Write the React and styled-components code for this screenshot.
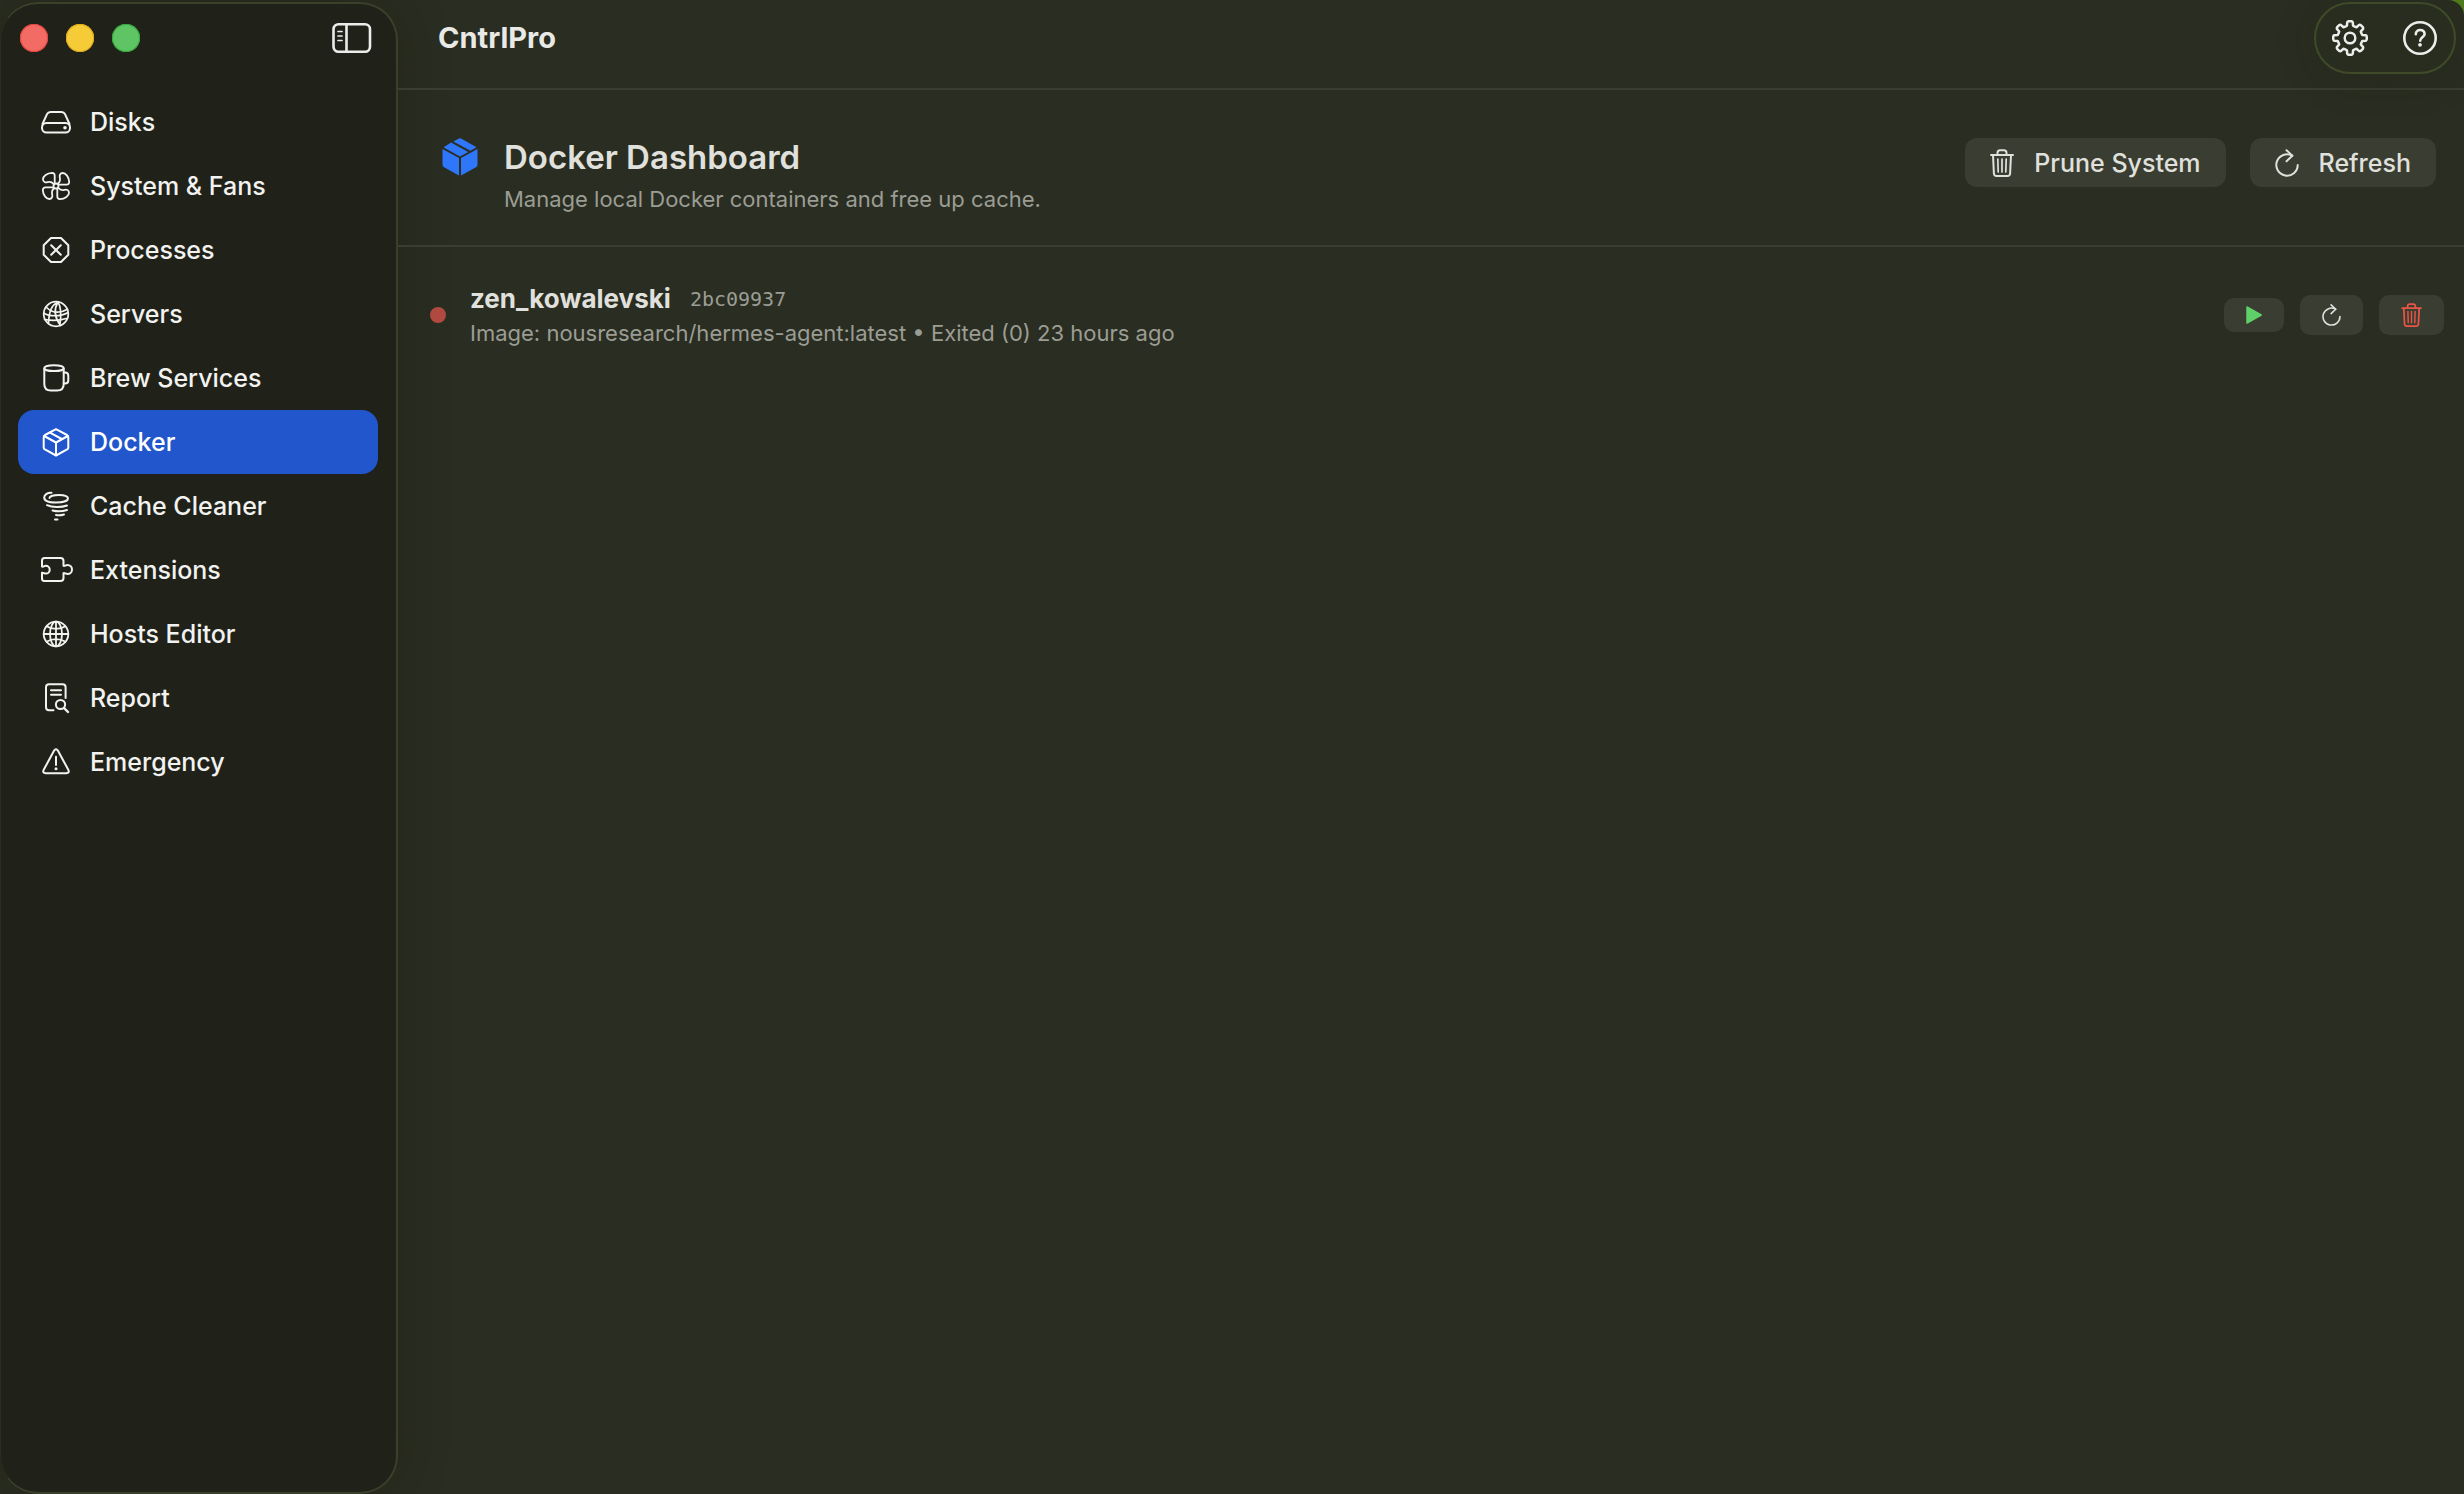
import { useState } from 'react';
import styled, { createGlobalStyle, css } from 'styled-components';

const GlobalStyle = createGlobalStyle`
    * {
        box-sizing: border-box;
    }

    body {
        margin: 0;
        background: #4f7a1c;
        color: #e0e1dd;
        font-family: Inter, 'Liberation Sans', sans-serif;
        font-size: 25px;
    }

    button {
        border: none;
        background: none;
        padding: 0;
        color: inherit;
        font: inherit;
        cursor: pointer;
    }
`;

const Window = styled.div`
    display: flex;
    min-height: 100vh;
    padding-top: 2px;
    border-top-right-radius: 16px;
    background: #2a2d21;
    overflow: hidden;
`;

const Sidebar = styled.aside`
    flex: 0 0 398px;
    border: 2px solid #3a412b;
    border-left: 1px solid #2a2e20;
    border-radius: 38px;
    background: #20221a;
    box-shadow: 0 0 50px rgba(20, 24, 8, 0.3);
`;

const SidebarTop = styled.div`
    display: flex;
    align-items: center;
    justify-content: space-between;
    height: 68px;
    padding: 0 24px 0 19px;
`;

const Lights = styled.div`
    display: flex;
    gap: 18px;
`;

const Light = styled.button`
    width: 28px;
    height: 28px;
    border-radius: 50%;
    background: ${(props) => props.$fill};
    box-shadow: inset 0 0 0 1px ${(props) => props.$edge};
`;

const IconButton = styled.button`
    display: grid;
    place-items: center;
    color: #ecedea;
`;

const Nav = styled.nav`
    padding: 18px 18px 0 17px;
`;

const NavItem = styled.button`
    display: flex;
    align-items: center;
    gap: 16px;
    width: 100%;
    height: 64px;
    padding: 0 20px;
    border-radius: 16px;
    color: #f2f3f0;
    font-weight: 500;
    text-align: left;

    ${(props) =>
        props.$active &&
        css`
            background: #2156cc;
            color: #ffffff;
        `}
`;

const Main = styled.main`
    flex: 1;
    min-width: 0;
`;

const TitleBar = styled.header`
    display: flex;
    align-items: center;
    justify-content: space-between;
    height: 88px;
    padding: 0 8px 14px 40px;
    border-bottom: 2px solid #3a3d32;
`;

const AppTitle = styled.h1`
    margin: 0;
    font-size: 29px;
    font-weight: 700;
    line-height: 36px;
    color: #e9eae6;
`;

const Tools = styled.div`
    display: flex;
    align-items: center;
    justify-content: space-between;
    width: 142px;
    height: 72px;
    padding: 0 16px;
    border: 2px solid #3f4b28;
    border-radius: 36px;
    background: #292d20;
    box-shadow: 0 4px 40px rgba(24, 28, 14, 0.2);
`;

const PageHeader = styled.section`
    display: flex;
    align-items: center;
    justify-content: space-between;
    height: 157px;
    padding: 0 28px 10px 42px;
    border-bottom: 2px solid #3a3d32;
`;

const Heading = styled.div`
    display: grid;
    grid-template-columns: 38px auto;
    column-gap: 26px;
    row-gap: 6px;
    align-items: center;
    justify-items: end;
    padding-top: 27px;
`;

const PageTitle = styled.h2`
    justify-self: start;
    margin: 0;
    font-size: 33px;
    font-weight: 600;
    line-height: 40px;
`;

const PageText = styled.p`
    grid-column: 2;
    margin: 0;
    font-size: 22px;
    line-height: 32px;
    color: #9b9d95;
`;

const Actions = styled.div`
    display: flex;
    align-items: center;
    gap: ${(props) => props.$gap};
`;

const TextButton = styled.button`
    display: flex;
    align-items: center;
    gap: 20px;
    height: 49px;
    padding: 0 25px;
    border-radius: 12px;
    background: #3a3d31;
    font-weight: 500;
`;

const ContainerRow = styled.article`
    display: flex;
    align-items: center;
    height: 72px;
    margin-top: 32px;
    padding: 0 20px 0 32px;
`;

const StatusDot = styled.span`
    width: 16px;
    height: 16px;
    margin-right: 24px;
    border-radius: 50%;
    background: #b04a40;
`;

const Info = styled.div`
    flex: 1;
`;

const NameLine = styled.div`
    display: flex;
    align-items: center;
    gap: 19px;
    line-height: 36px;
`;

const Name = styled.strong`
    font-size: 26px;
    font-weight: 700;
`;

const ShortId = styled.code`
    font-family: 'DejaVu Sans Mono', monospace;
    font-size: 20px;
    color: #9b9d95;
`;

const Details = styled.div`
    font-size: 22px;
    line-height: 32px;
    color: #9b9d95;
`;

const SmallButton = styled.button`
    display: grid;
    place-items: center;
    padding: 8px 22px;
    border-radius: 10px;
    background: #3a3d31;
    color: ${(props) => props.$color || '#e0e1dd'};
`;

// общая обертка для иконок
function Icon({ w = 36, h = 32, box, stroke = 2, children }) {
    return (
        <svg
            width={w}
            height={h}
            viewBox={box || `0 0 ${w} ${h}`}
            fill="none"
            stroke="currentColor"
            strokeWidth={stroke}
            strokeLinecap="round"
            strokeLinejoin="round"
            aria-hidden="true"
        >
            {children}
        </svg>
    );
}

const DiskIcon = () => (
    <Icon>
        <path d="M4.5 18 9 8.2Q10 6 12.5 6h11q2.5 0 3.5 2.2L31.500 18" />
        <rect x="4" y="17" width="28" height="9.500" rx="4.500" />
        <circle cx="27" cy="21.700" r="1.800" fill="currentColor" stroke="none" />
    </Icon>
);

const FanIcon = () => (
    <Icon stroke={1.8}>
        {[0, 90, 180, 270].map((angle) => (
            <path
                key={angle}
                transform={`rotate(${angle} 18 16)`}
                d="M16.700 13V5.500Q16.700 3 14 2.800C9 3 5 6.300 5 9.300 5 12 7.500 12.700 9.500 12.200 12 11.600 14 12 15.500 14"
            />
        ))}
        <circle cx="18" cy="16" r="2.500" />
    </Icon>
);

const ProcessIcon = () => (
    <Icon>
        <path d="M13 4h10l7.300 7.300v9.400L23 28H13l-7.300-7.300v-9.400z" />
        <path d="m13.200 11.200 9.600 9.600m0-9.600-9.600 9.600" />
    </Icon>
);

const NetworkIcon = () => (
    <Icon stroke={1.7}>
        <circle cx="18" cy="16" r="12.300" />
        <path d="M20 3.900C14 7 11 12 10.500 25.500M20 3.900c-4 7-4 15 2.500 23.500M20 3.900c3 5 3.500 13 1.800 23.300" />
        <path d="M8 9c6 6 14 6.500 21.500 2.200M5.700 15c5 3.500 17 4 24.400-.5M6.500 21.500c6 1 14 1.500 21.800-1" />
    </Icon>
);

const MugIcon = () => (
    <Icon>
        <ellipse cx="16" cy="6.200" rx="9.700" ry="2.900" />
        <path d="M6.300 6.500V22q0 6.500 6.500 6.500h6.400q6.500 0 6.500-6.500V6.500" />
        <path d="M25.700 10.500h1.300q3.300 0 3.300 3.300v4.400q0 3.300-3.300 3.300h-1.300" />
    </Icon>
);

const BoxIcon = () => (
    <Icon>
        <path d="M18 3.200 29 9q1.300.8 1.300 2.200v10.200q0 1.300-1.200 2L18 29.500 6.900 23.400q-1.200-.7-1.200-2V11.200Q5.700 9.800 7 9z" />
        <path d="M6.200 10 18 16.500 29.800 10M18 16.500v12.800M12 6.600l11.800 6.400" />
    </Icon>
);

const TornadoIcon = () => (
    <Icon>
        <path d="M13.500 2.800C9 2.600 6.200 4.800 6.200 7.500 6.200 11 12 12.500 18 12.500s12-1.300 12-4-4-3.500-9-3.500-9.500 1.200-9.500 3" />
        <path d="M9 15.200c5 2.300 14.500 2.400 20 .3M14.500 20.500c4 1 10 1 14.500-.5M18 25c2.500.5 5.500.3 8-.5M17 29.400h2.500" />
    </Icon>
);

const PuzzleIcon = () => (
    <Icon>
        <path d="M6.500 4h16q3 0 3 3v4.800c1.200.5 2-.8 4-.8a4.500 4.500 0 0 1 0 9c-2 0-2.800-1.300-4-.8V24q0 3-3 3h-16Q4 27 4 24.500v-5.700c1.500-.3 2 .8 3.800.8a3.900 3.900 0 0 0 0-7.800C6 11.800 5.500 13 4 12.600V6.500Q4 4 6.500 4z" />
    </Icon>
);

const GlobeIcon = () => (
    <Icon stroke={1.8}>
        <circle cx="18" cy="16" r="12.300" />
        <ellipse cx="18" cy="16" rx="6" ry="12.300" />
        <path d="M18 3.700v24.600M5.700 16h24.600M8.500 8.200c5.500 3.500 13.500 3.500 19 0M8.500 23.800c5.500-3.500 13.500-3.500 19 0" />
    </Icon>
);

const ReportIcon = () => (
    <Icon>
        <path d="M15.500 28.300H11q-3 0-3-3V5.200q0-3 3-3h13.600q3 0 3 3V16" />
        <path d="M13 8.200h10M13 12.700h10" />
        <circle cx="22.500" cy="22.500" r="4.600" />
        <path d="m26 26 4 4" strokeWidth="2.400" />
    </Icon>
);

const WarningIcon = () => (
    <Icon>
        <path d="M16 4.800q2-3.300 4 0l10.300 19q1.500 3.200-2 3.500H7.700q-3.500-.3-2-3.500z" />
        <path d="M18 10.800v8.200" />
        <circle cx="18" cy="22.700" r="1.500" fill="currentColor" stroke="none" />
    </Icon>
);

const PanelIcon = () => (
    <Icon w={40} h={32} stroke={2.6}>
        <rect x="1.500" y="2.200" width="36.500" height="27.600" rx="5" />
        <path d="M14.500 2.500v27" />
        <path d="M6 9.500h4M6 14h4M6 18.500h4" strokeWidth="1.700" />
    </Icon>
);

// контур шестеренки из 8 зубцов
const gearPath = Array.from({ length: 8 }, (_, i) => {
    const point = (r, deg) => {
        const a = ((i * 45 + deg - 90) * Math.PI) / 180;
        return `${(18 + r * Math.cos(a)).toFixed(2)} ${(18 + r * Math.sin(a)).toFixed(2)}`;
    };
    return `${i ? 'L' : 'M'}${point(12.6, -14)}L${point(16, -10)}Q${point(16.8, -8)} ${point(16.8, -5)}L${point(16.8, 5)}Q${point(16.8, 8)} ${point(16, 10)}L${point(12.6, 14)}Q${point(12.2, 22.5)} ${point(12.6, 31)}`;
}).join('');

const GearIcon = () => (
    <Icon w={36} h={36} stroke={2.5}>
        <path d={`${gearPath}Z`} />
        <circle cx="18" cy="18" r="5.300" />
    </Icon>
);

const HelpIcon = () => (
    <Icon w={36} h={36} stroke={2.6}>
        <circle cx="18" cy="18" r="15.700" />
        <path d="M13.800 14.300c0-2.700 1.900-4.300 4.400-4.300s4.400 1.500 4.400 3.900c0 3.400-4.400 3.300-4.400 6.800" />
        <circle cx="18" cy="24.800" r="1.900" fill="currentColor" stroke="none" />
    </Icon>
);

const TrashIcon = ({ w, h }) => (
    <Icon w={w} h={h} box="0 0 24 28">
        <path d="M1 6h22M7.500 6V3.800Q7.500 1.200 10 1.200h4q2.500 0 2.500 2.600V6M3 6l.9 18.500q.2 2.500 2.600 2.500h11q2.400 0 2.600-2.500L21 6" />
        <path d="m7.800 10 .4 13M12 10v13m4.200-13-.4 13" strokeWidth="1.700" />
    </Icon>
);

const RefreshIcon = ({ w, h }) => (
    <Icon w={w} h={h} box="0 0 24 28">
        <path d="M17.300 6.700A10.700 10.700 0 1 0 22.700 16" />
        <path d="m11.500 1.200 5.800 5.500-5.800 5.500" />
    </Icon>
);

const PlayIcon = () => (
    <Icon w={16} h={18} stroke={1.5}>
        <path d="M1 1v16l14.200-8z" fill="currentColor" />
    </Icon>
);

const DockerIcon = () => (
    <svg width="36" height="38" viewBox="0 0 36 38" fill="#2e77fa" aria-hidden="true">
        <path d="M.5 11 17 20v17.500L2 29.300Q.5 28.500.5 27z" />
        <path d="M35.500 11 19 20v17.500l15-8.200q1.500-.8 1.500-2.300z" />
        <path d="M9 4.600 26.300 14 18 18.400 1.800 9.400q.3-.6 1-1z" />
        <path d="M11.300 3.400 16.500.7q1.500-.7 3 0L33.200 8.400l1 1-5.700 3.300z" />
    </svg>
);

const sections = [
    { label: 'Disks', icon: DiskIcon },
    { label: 'System & Fans', icon: FanIcon },
    { label: 'Processes', icon: ProcessIcon },
    { label: 'Servers', icon: NetworkIcon },
    { label: 'Brew Services', icon: MugIcon },
    { label: 'Docker', icon: BoxIcon },
    { label: 'Cache Cleaner', icon: TornadoIcon },
    { label: 'Extensions', icon: PuzzleIcon },
    { label: 'Hosts Editor', icon: GlobeIcon },
    { label: 'Report', icon: ReportIcon },
    { label: 'Emergency', icon: WarningIcon },
];

const containers = [
    {
        id: '2bc09937',
        name: 'zen_kowalevski',
        image: 'nousresearch/hermes-agent:latest',
        status: 'Exited (0) 23 hours ago',
    },
];

function Container({ container }) {
    const { id, name, image, status } = container;

    return (
        <ContainerRow>
            <StatusDot />
            <Info>
                <NameLine>
                    <Name>{name}</Name>
                    <ShortId>{id}</ShortId>
                </NameLine>
                <Details>
                    Image: {image} • {status}
                </Details>
            </Info>
            <Actions $gap="16px">
                <SmallButton $color="#5fd068" aria-label="Start">
                    <PlayIcon />
                </SmallButton>
                <SmallButton aria-label="Restart">
                    <RefreshIcon w={19} h={24} />
                </SmallButton>
                <SmallButton $color="#ea5545" aria-label="Remove">
                    <TrashIcon w={21} h={24} />
                </SmallButton>
            </Actions>
        </ContainerRow>
    );
}

function App() {
    // активный раздел в боковом меню
    const [active, setActive] = useState('Docker');

    return (
        <>
            <GlobalStyle />
            <Window>
                <Sidebar>
                    <SidebarTop>
                        <Lights>
                            <Light $fill="#f36b65" $edge="#e5453d" aria-label="Close" />
                            <Light $fill="#f6cb38" $edge="#e0ad1c" aria-label="Minimize" />
                            <Light $fill="#5fc564" $edge="#36a83c" aria-label="Zoom" />
                        </Lights>
                        <IconButton aria-label="Toggle sidebar">
                            <PanelIcon />
                        </IconButton>
                    </SidebarTop>
                    <Nav>
                        {sections.map(({ label, icon: SectionIcon }) => (
                            <NavItem
                                key={label}
                                $active={label === active}
                                onClick={() => setActive(label)}
                            >
                                <SectionIcon />
                                {label}
                            </NavItem>
                        ))}
                    </Nav>
                </Sidebar>

                <Main>
                    <TitleBar>
                        <AppTitle>CntrlPro</AppTitle>
                        <Tools>
                            <IconButton aria-label="Settings">
                                <GearIcon />
                            </IconButton>
                            <IconButton aria-label="Help">
                                <HelpIcon />
                            </IconButton>
                        </Tools>
                    </TitleBar>

                    <PageHeader>
                        <Heading>
                            <DockerIcon />
                            <PageTitle>Docker Dashboard</PageTitle>
                            <PageText>
                                Manage local Docker containers and free up cache.
                            </PageText>
                        </Heading>
                        <Actions $gap="24px">
                            <TextButton>
                                <TrashIcon w={24} h={28} />
                                Prune System
                            </TextButton>
                            <TextButton>
                                <RefreshIcon w={24} h={28} />
                                Refresh
                            </TextButton>
                        </Actions>
                    </PageHeader>

                    {containers.map((container) => (
                        <Container key={container.id} container={container} />
                    ))}
                </Main>
            </Window>
        </>
    );
}

export default App;
